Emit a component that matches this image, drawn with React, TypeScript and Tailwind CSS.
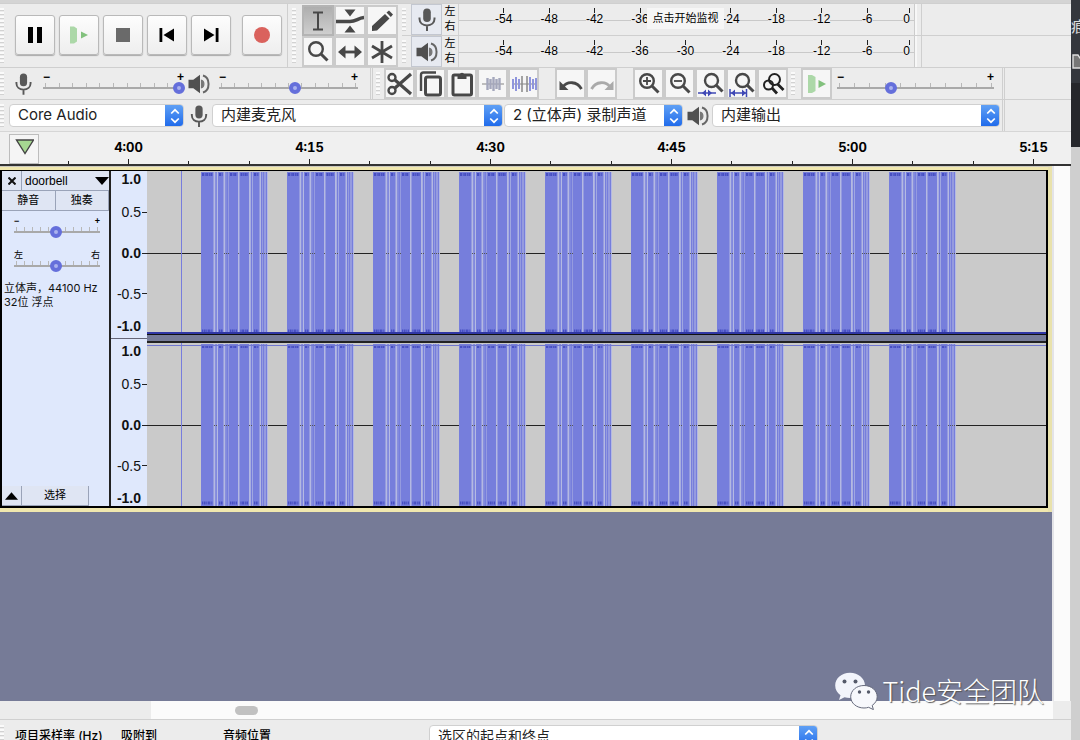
import React from 'react';

const FONT = "font-['Inter','Noto_Sans_CJK_SC',sans-serif]";
const ARIAL = "font-['Liberation_Sans','Noto_Sans_CJK_SC',sans-serif]";

function Grip({ className = '' }: { className?: string }) {
  return (
    <div
      className={`w-1 shrink-0 self-stretch bg-[repeating-linear-gradient(to_bottom,#fafafa_0_2px,#d2d2d2_2px_3px,#ececec_3px_4px)] ${className}`}
    />
  );
}

function MicIcon({ className = 'h-[23px] w-[18px]' }: { className?: string }) {
  return (
    <svg viewBox="0 0 18 23" className={`shrink-0 ${className}`} fill="none" stroke="#585858" strokeWidth="2">
      <rect x="5.2" y="0.5" width="7.6" height="13.5" rx="3.8" fill="#585858" stroke="none" />
      <path d="M1.5 9.5v1.3c0 4 3.2 6.6 7.5 6.6s7.5-2.6 7.5-6.6V9.5M9 17.5V23" />
    </svg>
  );
}

function SpeakerIcon({ className = 'h-5 w-[22px]' }: { className?: string }) {
  return (
    <svg viewBox="0 0 22 20" className={`shrink-0 ${className}`} fill="none">
      <path d="M0.5 5.8h4.8L12 0.8v18.4L5.3 14.2H0.5z" fill="#505050" />
      <path d="M13.5 6.2c3.2 1 3.2 6.6 0 7.6z" fill="#777" stroke="#777" strokeWidth="1.2" />
      <path d="M15 1.5c7.4 2 7.4 15 0 17" stroke="#666" strokeWidth="2" />
    </svg>
  );
}

type SliderProps = {
  label: string;
  value: number;
  ticks: number;
  width: string;
  low?: string;
  high?: string;
  small?: boolean;
  ends?: string;
};

function Slider({
  label,
  value,
  ticks,
  width,
  low = '−',
  high = '+',
  small = false,
  ends = 'font-bold',
}: SliderProps) {
  return (
    <div className={`relative shrink-0 ${width} ${small ? 'h-[26px]' : 'h-[30px]'}`}>
      <div
        className={`flex justify-between ${ends} ${ARIAL} ${
          small ? 'h-3 text-[9px] leading-3' : 'h-3.5 text-[12px] leading-4'
        } text-black`}
      >
        <span>{low}</span>
        <span>{high}</span>
      </div>
      <div className="flex h-1 justify-between px-0.5">
        {Array.from({ length: ticks }, (_, i) => (
          <span key={i} className="w-px bg-[#b8b8b8]" />
        ))}
      </div>
      <div className="h-0.5 bg-[#a9a9a9]" />
      <input
        type="range"
        aria-label={label}
        defaultValue={value}
        className={`absolute -inset-x-1 m-0 h-4 appearance-none bg-transparent ${
          small ? 'bottom-px' : 'bottom-[3px]'
        } [&::-webkit-slider-thumb]:h-3 [&::-webkit-slider-thumb]:w-3 [&::-webkit-slider-thumb]:appearance-none [&::-webkit-slider-thumb]:rounded-full [&::-webkit-slider-thumb]:border-4 [&::-webkit-slider-thumb]:border-[#656fdb] [&::-webkit-slider-thumb]:bg-[#aab2ee]`}
      />
    </div>
  );
}

function Select({ label, value, className = '' }: { label: string; value: string; className?: string }) {
  return (
    <div className={`relative h-[23px] overflow-hidden rounded-[4px] border border-[#d0d0d0] bg-white ${className}`}>
      <select
        aria-label={label}
        className="block h-5 w-full appearance-none bg-transparent pl-2 text-[15px] leading-5 text-[#222] outline-none"
      >
        <option>{value}</option>
      </select>
      <span className="pointer-events-none absolute -top-px -right-px flex h-[23px] w-[19px] items-center justify-center bg-linear-to-b from-[#62a2f5] to-[#1c68ea]">
        <svg viewBox="0 0 10 16" className="h-4 w-[10px]" fill="none" stroke="#fff" strokeWidth="1.7">
          <path d="M1.2 5.5 5 1.8l3.8 3.7M1.2 10.5 5 14.2l3.8-3.7" />
        </svg>
      </span>
    </div>
  );
}

function TransportButton({ label, children }: { label: string; children: React.ReactNode }) {
  return (
    <button
      aria-label={label}
      className="flex h-10 w-10 items-center justify-center rounded-[3px] border border-[#b9b9b9] bg-linear-to-b from-[#fdfdfd] to-[#eeeeee] shadow-[0_1px_1px_#aaa]"
    >
      <svg viewBox="0 0 24 24" className="h-6 w-6">
        {children}
      </svg>
    </button>
  );
}

function ToolButton({
  label,
  children,
  active = false,
  size = 'h-[31px] w-[31px]',
}: {
  label: string;
  children: React.ReactNode;
  active?: boolean;
  size?: string;
}) {
  return (
    <button
      aria-label={label}
      className={`flex shrink-0 items-center justify-center border-2 ${size} ${
        active ? 'border-[#b4b4b4] bg-linear-to-b from-[#aeaeae] to-[#cecece]' : 'border-[#cbcbcb] bg-[#f6f6f6]'
      }`}
    >
      <svg viewBox="0 0 28 28" className="h-7 w-7 shrink-0" fill="none" stroke="#484848" strokeWidth="2.4">
        {children}
      </svg>
    </button>
  );
}

const Magnifier = () => (
  <>
    <circle cx="12" cy="11" r="6.8" />
    <path d="m17 16 6.5 6.5" strokeWidth="3" />
  </>
);

function MeterRow({ name, icon, tip }: { name: string; icon: React.ReactNode; tip?: string }) {
  const marks = ['-54', '-48', '-42', '-36', tip ? '' : '-30', '-24', '-18', '-12', '-6'];
  return (
    <div className="flex h-8 border-b border-[#cfcfcf]">
      <Grip className="my-1" />
      <button
        aria-label={name}
        className="ml-[5px] flex h-[31px] w-[31px] items-center justify-center border border-[#c3c7d0] bg-[#e7eaf1]"
      >
        {icon}
      </button>
      <div className="w-[16px] text-center text-[11px] leading-[15px] text-black">
        <div>左</div>
        <div>右</div>
      </div>
      <div className={`relative flex w-[459px] border-l border-[#d2d2d2] pl-[22px] text-[12px] text-black ${ARIAL}`}>
        <div className="absolute inset-x-0 top-4 h-px bg-[#c9c9c9]" />
        {marks.map((m, i) => (
          <div key={i} className="relative flex flex-1 flex-col items-center pt-1">
            <span className="h-[5px] w-px bg-[#222]" />
            <span className="bg-[#ececec] leading-[13px]">{m}</span>
          </div>
        ))}
        <div className="relative flex w-6 flex-col items-end pt-1 pr-1">
          <span className="h-[5px] w-px bg-[#222]" />
          <span className="bg-[#ececec] leading-[13px]">0</span>
        </div>
        <div className="relative w-[3px] border-l border-[#ccc] bg-[#f7f7f7]" />
        {tip && (
          <div className="absolute top-1 left-[188px] flex h-[21px] w-[77px] items-center justify-center bg-[#f6f6f6] text-[11px] whitespace-nowrap">
            {tip}
          </div>
        )}
      </div>
      <div className="w-[5px] border-r border-[#cfcfcf]" />
    </div>
  );
}

const BURSTS = [0, 1, 2, 3, 4, 5, 6, 7, 8].map((i) => 54 + i * 86);
const BARS: [number, number][] = [
  [0, 12.5],
  [17, 5.5],
  [28, 9],
  [38.5, 9.5],
  [52, 6.5],
];
const THIN = [14.3, 24.3, 26, 49.8, 60, 62, 64.5];

function Waveform({ name, edge }: { name: string; edge: 'top' | 'bottom' }) {
  return (
    <svg role="img" aria-label={name} viewBox="0 0 899 163" preserveAspectRatio="none" className="block h-[163px] w-full">
      <rect width="899" height="163" fill="#cacaca" />
      <rect y="82" width="899" height="1" fill="#222" />
      <rect x="34" width="1" height="163" fill="#777ddd" />
      {BURSTS.map((x) => (
        <g key={x} transform={`translate(${x} 0)`}>
          <rect y="1" width="67" height="162" fill="#b4b9e2" />
          {BARS.map(([bx, w]) => (
            <g key={bx}>
              <rect x={bx} y="1" width={w} height="162" fill="#767edc" />
              <path d={`M${bx + 1} 3.5h${w - 2}`} stroke="#474fc2" strokeWidth="3" strokeDasharray="2 .7 1 .5" />
              <path d={`M${bx + 1} 160h${w - 2}`} stroke="#474fc2" strokeWidth="3" strokeDasharray="1 .6 2 .7" />
            </g>
          ))}
          {THIN.map((tx) => (
            <rect key={tx} x={tx} y="1" width="1.5" height="162" fill="#767edc" />
          ))}
          <path d="M13 82.5h4M23 82.5h5M37 82.5h1.5M48 82.5h4M59 82.5h7" stroke="#555" strokeDasharray="1 1" />
        </g>
      ))}
      {edge === 'bottom' ? (
        <rect y="161" width="899" height="2" fill="#3037a5" />
      ) : (
        <rect y="2" width="899" height="1" fill="#7077cf" />
      )}
    </svg>
  );
}

function VerticalScale() {
  const rows = [
    { v: '1.0', c: 'h-4 font-bold', tick: false },
    { v: '0.5', c: 'h-[50px]', tick: true },
    { v: '0.0', c: 'h-8 font-bold', tick: true },
    { v: '-0.5', c: 'h-[49px]', tick: true },
    { v: '-1.0', c: 'h-4 font-bold', tick: false },
  ];
  return (
    <div className={`w-9 text-[14px] leading-4 text-[#111] ${ARIAL}`}>
      {rows.map((r) => (
        <div key={r.v} className={`flex items-center justify-end ${r.c}`}>
          <span>{r.v}</span>
          <span className={`ml-px h-px w-[5px] ${r.tick ? 'bg-[#222]' : ''}`} />
        </div>
      ))}
    </div>
  );
}

const PANEL_BUTTON = 'border-r border-b border-[#9aa3b8] bg-[#dfe5f3] text-[11px] text-black';

export default function App() {
  return (
    <div className={`relative flex h-screen overflow-hidden bg-[#ececec] ${FONT}`}>
      <main className="flex min-w-0 flex-1 flex-col overflow-hidden">
        <div className="h-[3px] shrink-0 bg-[#d4d4d4]" />

        <section className="flex h-[65px] shrink-0 border-t border-b border-[#cfcfcf]">
          <Grip className="my-1" />
          <div className="flex w-[284px] shrink-0 items-start gap-1 border-r border-[#cfcfcf] pt-[11px] pl-[11px]">
            <TransportButton label="暂停">
              <path d="M5 4h5v16H5zM14 4h5v16h-5z" />
            </TransportButton>
            <TransportButton label="播放">
              <path d="M3 3.5h4l3 2v13l-3 2H3z" fill="#acd8a8" />
              <path d="M14 8.5v7l7-3.5z" fill="#82c17d" />
            </TransportButton>
            <TransportButton label="停止">
              <path d="M5 5h14v14H5z" fill="#6a6a6a" />
            </TransportButton>
            <TransportButton label="跳至开头">
              <path d="M4.5 5h2.8v14H4.5zM19 5.5v13L8.5 12z" />
            </TransportButton>
            <TransportButton label="跳至结尾">
              <path d="M16.7 5h2.8v14h-2.8zM5 5.5v13L15.5 12z" />
            </TransportButton>
            <div className="ml-[7px]">
              <TransportButton label="录音">
                <circle cx="12" cy="12" r="8" fill="#da625d" />
              </TransportButton>
            </div>
          </div>
          <Grip className="mx-1 my-1" />
          <div className="ml-0.5 grid w-24 grid-cols-3 self-start pt-px">
            <ToolButton label="选择工具" active size="h-[31px] w-8">
              <path d="M9 5.5h10M9 22.5h10M14 5.5v17" strokeWidth="2" />
            </ToolButton>
            <ToolButton label="包络工具" size="h-[31px] w-8">
              <path d="M0 14.5h14c6 0 8-3.5 14-4" strokeWidth="3.5" />
              <path d="M8.5 2.5h11L14 9.5zM8.5 25.5h11L14 18.5z" fill="#484848" stroke="none" />
            </ToolButton>
            <ToolButton label="绘制工具" size="h-[31px] w-8">
              <path d="M4 24v-5L17 7l4.500 4.500L9 23.500zM18.500 5.500 21 3.500l4 4-2.200 2.600z" fill="#484848" stroke="none" />
            </ToolButton>
            <ToolButton label="缩放工具" size="h-[31px] w-8">
              <Magnifier />
            </ToolButton>
            <ToolButton label="时间移动工具" size="h-[31px] w-8">
              <path d="M6 14h16" strokeWidth="2.8" />
              <path d="M9.5 7.5v13L2 14zM18.5 7.5v13L26 14z" fill="#484848" stroke="none" />
            </ToolButton>
            <ToolButton label="多功能工具" size="h-[31px] w-8">
              <path d="M14 3v22M4 8l20 12M24 8 4 20" strokeWidth="2.8" />
            </ToolButton>
          </div>
          <div className="ml-1 flex-1">
            <MeterRow name="录音电平" icon={<MicIcon className="h-[23px] w-[18px]" />} tip="点击开始监视" />
            <MeterRow name="播放电平" icon={<SpeakerIcon />} />
          </div>
        </section>

        <section className="flex h-8 shrink-0 items-center border-b border-[#cfcfcf]">
          <Grip className="my-1" />
          <MicIcon className="ml-[11px] h-[22px] w-[17px]" />
          <div className="ml-[11px]">
            <Slider label="录音音量" value={98} ticks={11} width="w-[141px]" />
          </div>
          <SpeakerIcon className="ml-1 h-5 w-[22px]" />
          <div className="ml-[9px]">
            <Slider label="播放音量" value={55} ticks={11} width="w-[139px]" />
          </div>
          <div className="ml-3 h-full w-[3px] border-x border-[#cfcfcf]" />
          <Grip className="my-1 mr-1 ml-[3px]" />
          <div className="flex">
            <ToolButton label="剪切">
              <circle cx="6" cy="7.5" r="3.5" />
              <circle cx="6" cy="20.5" r="3.5" />
              <path d="m9 10 16 14M9 18 25 4" strokeWidth="3.2" />
            </ToolButton>
            <ToolButton label="复制">
              <rect x="8.5" y="7" width="15" height="18" rx="2" strokeWidth="3" />
              <path d="M4 21V5q0-2.5 2.5-2.5H19" />
            </ToolButton>
            <ToolButton label="粘贴">
              <rect x="5" y="5" width="18.5" height="20" rx="1.5" strokeWidth="3" />
              <path d="M9.5 4.5h2.2a2.4 2.4 0 0 1 4.6 0h2.2V9h-9z" fill="#484848" stroke="none" />
            </ToolButton>
            <ToolButton label="修剪音频">
              <path d="M3 14h22" stroke="#aaa" strokeWidth="1.5" />
              <path d="M8.5 8v12M11.5 9v10M14.5 7v14M17.5 9v10M20.5 8v12" stroke="#a4a7bc" strokeWidth="2.4" />
            </ToolButton>
            <ToolButton label="静音音频">
              <path d="M2 14h24" stroke="#aaa" strokeWidth="1.5" />
              <path d="M3 9v10M6 7v14M9 9v10M20 7v14M23 9v10M26 8v12" stroke="#8f95dc" strokeWidth="2" />
              <path d="M12 6v16M17 6v16" stroke="#888" strokeWidth="1.5" />
            </ToolButton>
          </div>
          <div className="ml-4 flex">
            <ToolButton label="撤销">
              <path d="M6 17C10 11 20 11 24.5 19" strokeWidth="2.8" />
              <path d="M2.5 11v9h9z" fill="#484848" stroke="none" />
            </ToolButton>
            <ToolButton label="重做">
              <path d="M3.5 19C8 11 18 11 22 17" stroke="#aaa" strokeWidth="2.8" />
              <path d="M25.5 11v9h-9z" fill="#aaa" stroke="none" />
            </ToolButton>
          </div>
          <div className="ml-4 flex">
            <ToolButton label="放大">
              <Magnifier />
              <path d="M8 11h8M12 7v8" strokeWidth="1.8" />
            </ToolButton>
            <ToolButton label="缩小">
              <Magnifier />
              <path d="M8 11h8" strokeWidth="1.8" />
            </ToolButton>
            <ToolButton label="适应选区">
              <circle cx="14.5" cy="10.5" r="6.5" />
              <path d="m19 15 6.5 6.5" strokeWidth="3" />
              <path d="M1 23h18" stroke="#3f48b5" strokeWidth="1.5" />
              <path d="M9 19.5v7L5 23zM11 19.5v7l4-3.5z" fill="#3f48b5" stroke="none" />
            </ToolButton>
            <ToolButton label="适应项目">
              <circle cx="14.5" cy="10.5" r="6.5" />
              <path d="m19 15 6.5 6.5" strokeWidth="3" />
              <path d="M2 19v8M18.5 19v8M2 23h16" stroke="#3f48b5" strokeWidth="1.5" />
              <path d="M7 19.5v7L3 23zM14 19.5v7l4-3.5z" fill="#3f48b5" stroke="none" />
            </ToolButton>
            <ToolButton label="缩放切换">
              <circle cx="15.5" cy="9.5" r="5.5" stroke="#222" strokeWidth="2" />
              <circle cx="9.5" cy="15" r="4.5" stroke="#222" strokeWidth="2" />
              <path d="m18.5 14 6 6M13 18l5 5.5" stroke="#222" strokeWidth="2.8" />
            </ToolButton>
          </div>
          <Grip className="my-1 mr-1 ml-[3px]" />
          <div className="ml-0.5 flex">
            <ToolButton label="按速度播放">
              <path d="M5 5h4l3.5 2v14L9 23H5z" fill="#acd8a8" stroke="none" />
              <path d="M15.5 10v8l7.5-4z" fill="#82c17d" stroke="none" />
            </ToolButton>
          </div>
          <div className="ml-[5px]">
            <Slider label="播放速度" value={34} ticks={11} width="w-[157px]" />
          </div>
          <div className="ml-2 h-full w-[3px] border-x border-[#cfcfcf]" />
        </section>

        <section className="flex h-8 shrink-0 items-center border-b border-[#d6d6d6]">
          <Grip className="my-1" />
          <Select label="音频主机" value="Core Audio" className="ml-[5px] w-[175px]" />
          <MicIcon className="ml-1.5 h-[22px] w-[18px]" />
          <Select label="录音设备" value="内建麦克风" className="ml-1 w-[291px]" />
          <Select label="录音声道" value="2 (立体声) 录制声道" className="ml-px w-[179px]" />
          <SpeakerIcon className="ml-1 h-5 w-[22px]" />
          <Select label="播放设备" value="内建输出" className="ml-[3px] w-[288px]" />
          <div className="ml-0.5 h-full w-[3px] border-x border-[#cfcfcf]" />
        </section>

        <section className="flex h-[34px] shrink-0 overflow-hidden border-b-2 border-[#333] bg-[#f0f0f0]">
          <div className="w-[38px] shrink-0 pt-0.5 pl-[9px]">
            <button
              aria-label="固定播放头"
              className="flex h-[30px] w-[30px] items-center justify-center border border-[#bdbdbd] bg-[#f5f5f5] pb-1"
            >
              <svg viewBox="0 0 20 18" className="h-[18px] w-5">
                <path d="M2.5 2h17L11 15.5z" fill="#a6d891" stroke="#444" strokeWidth="1.4" />
              </svg>
            </button>
          </div>
          {['4:00', '4:15', '4:30', '4:45', '5:00', '5:15'].map((t) => (
            <div key={t} className="flex w-[181px] shrink-0 flex-col justify-between pt-[7px]">
              <span className="text-center text-[13px] leading-4 font-bold text-black tabular-nums">{t}</span>
              <div className="flex items-end justify-around">
                <span className="h-[3px] w-px bg-[#222]" />
                <span className="h-[5px] w-px bg-[#222]" />
                <span className="h-[3px] w-px bg-[#222]" />
              </div>
            </div>
          ))}
        </section>

        <section className="flex min-h-0 flex-1">
          <div className="flex min-w-0 flex-1 flex-col bg-[#767b97]">
            <div className="border-t border-r-4 border-[#cbc9c0] border-r-[#e9e2ac]">
              <div className="border-t-[3px] border-b-4 border-[#f0e7ae]">
                <div className="flex border-t border-r-2 border-b-2 border-l-2 border-black">
                  <aside className="flex w-[109px] shrink-0 flex-col border-r-2 border-[#222] bg-[#dfe8fc]">
                    <div className="flex h-5">
                      <button aria-label="关闭轨道" className={`flex w-5 items-center justify-center ${PANEL_BUTTON}`}>
                        <svg viewBox="0 0 8 8" className="h-2 w-2" stroke="#111" strokeWidth="2">
                          <path d="m.5.5 7 7M7.5.5l-7 7" />
                        </svg>
                      </button>
                      <button
                        className={`flex flex-1 items-center justify-between border-b border-[#9aa3b8] bg-[#dfe5f3] pl-[3px] text-[12px] text-black ${ARIAL}`}
                      >
                        doorbell
                        <svg viewBox="0 0 14 8" className="h-2 w-[14px]">
                          <path d="M0 0h14L7 8z" />
                        </svg>
                      </button>
                    </div>
                    <div className="flex h-5">
                      <button className={`flex-1 ${PANEL_BUTTON}`}>静音</button>
                      <button className={`flex-1 ${PANEL_BUTTON}`}>独奏</button>
                    </div>
                    <div className="flex flex-col gap-2 pt-1 pl-3">
                      <Slider small label="增益" value={49} ticks={11} width="w-[86px]" />
                      <Slider
                        small
                        label="声像"
                        value={49}
                        ticks={11}
                        width="w-[86px]"
                        low="左"
                        high="右"
                        ends="font-normal"
                      />
                    </div>
                    <p className="pt-1.5 pl-0.5 text-[11px] leading-[14px] whitespace-nowrap text-[#111]">
                      立体声，44100 Hz
                      <br />
                      32位 浮点
                    </p>
                    <div className="mt-auto flex h-5">
                      <button aria-label="折叠轨道" className={`flex w-5 items-center justify-center ${PANEL_BUTTON}`}>
                        <svg viewBox="0 0 14 8" className="h-2 w-[13px]">
                          <path d="M0 8h14L7 0z" />
                        </svg>
                      </button>
                      <button className={`w-[67px] ${PANEL_BUTTON}`}>选择</button>
                    </div>
                  </aside>
                  <div className="flex w-9 shrink-0 flex-col justify-between bg-[#dfe8fc]">
                    <VerticalScale />
                    <div className="h-px bg-[#667]" />
                    <VerticalScale />
                  </div>
                  <div className="min-w-0 flex-1">
                    <Waveform name="左声道波形" edge="bottom" />
                    <div className="h-[9px] border-t border-b-2 border-t-[#111] border-b-[#222] bg-[#767b97]" />
                    <Waveform name="右声道波形" edge="top" />
                  </div>
                </div>
              </div>
            </div>
          </div>
          <div className="w-[19px] shrink-0 border-r border-l-2 border-r-[#d0d0d0] border-l-[#e4e4e8] bg-[#fbfbfb]" />
        </section>

        <div className="flex h-[19px] shrink-0 border-b border-[#d0d0d0]">
          <div className="w-[151px] shrink-0" />
          <div className="flex flex-1 items-center bg-[#fbfbfb] pl-[84px]">
            <div className="h-[9px] w-[23px] rounded-full bg-[#c1c1c1]" />
          </div>
          <div className="w-[18px] shrink-0" />
        </div>

        <footer className="flex h-5 shrink-0 items-start overflow-hidden pt-[5px] text-[12px] font-medium text-black">
          <Grip />
          <span className="ml-[11px] w-[106px] shrink-0 pt-0.5">项目采样率 (Hz)</span>
          <span className="w-[102px] shrink-0 pt-0.5">吸附到</span>
          <span className="w-[206px] shrink-0 pt-0.5">音频位置</span>
          <div className="w-[389px] shrink-0 font-normal">
            <Select label="选区" value="选区的起点和终点" className="w-full [&>select]:text-[14px]" />
          </div>
        </footer>
      </main>

      <aside className="flex w-[9px] shrink-0 flex-col overflow-hidden bg-[#cfcfcf]">
        <div className="h-[147px] bg-[#26272b]">
          <div className="h-[83px] bg-[#34373d] pt-4 text-[15px] leading-[22px] text-[#ddd]">
            痕
            <svg viewBox="0 0 18 15" className="mt-4 ml-px h-[15px] w-[18px] max-w-none" fill="#777" stroke="#ddd" strokeWidth="1.4">
              <path d="M1 14V1h5l2 3h9v10z" />
            </svg>
          </div>
        </div>
      </aside>

      <div className="pointer-events-none absolute right-9 bottom-[30px] flex items-center gap-1 text-white">
        <svg viewBox="0 0 44 38" className="h-[38px] w-11">
          <path
            d="M16 .8C7.5.8 1.2 6.4 1.2 13.5c0 4 2 7.5 5.3 9.8L5 28l5.5-2.7c1.7.5 3.5.8 5.500.8 8.300 0 15-5.700 15-12.600S24.300.8 16 .8z"
            fill="#f2f4fb"
          />
          <path
            d="M30 13.500c-7.500 0-13.300 5-13.300 11.300S22.500 36 30 36c1.600 0 3.200-.2 4.600-.7l4.800 2.300-1.200-4.200c3-2 5-5.100 5-8.600 0-6.300-5.700-11.300-13.200-11.300z"
            fill="#f7f8fc"
            stroke="#666a7c"
          />
          <g fill="#555a6a">
            <circle cx="10.5" cy="9.5" r="2" />
            <circle cx="21.5" cy="9.5" r="2" />
            <circle cx="25.5" cy="20" r="1.7" />
            <circle cx="34.5" cy="20" r="1.7" />
          </g>
        </svg>
        <span className="font-['Noto_Sans_CJK_SC',sans-serif] text-[27px] leading-9 font-light [text-shadow:1px_1px_1px_#555]">
          Tide安全团队
        </span>
      </div>
    </div>
  );
}
